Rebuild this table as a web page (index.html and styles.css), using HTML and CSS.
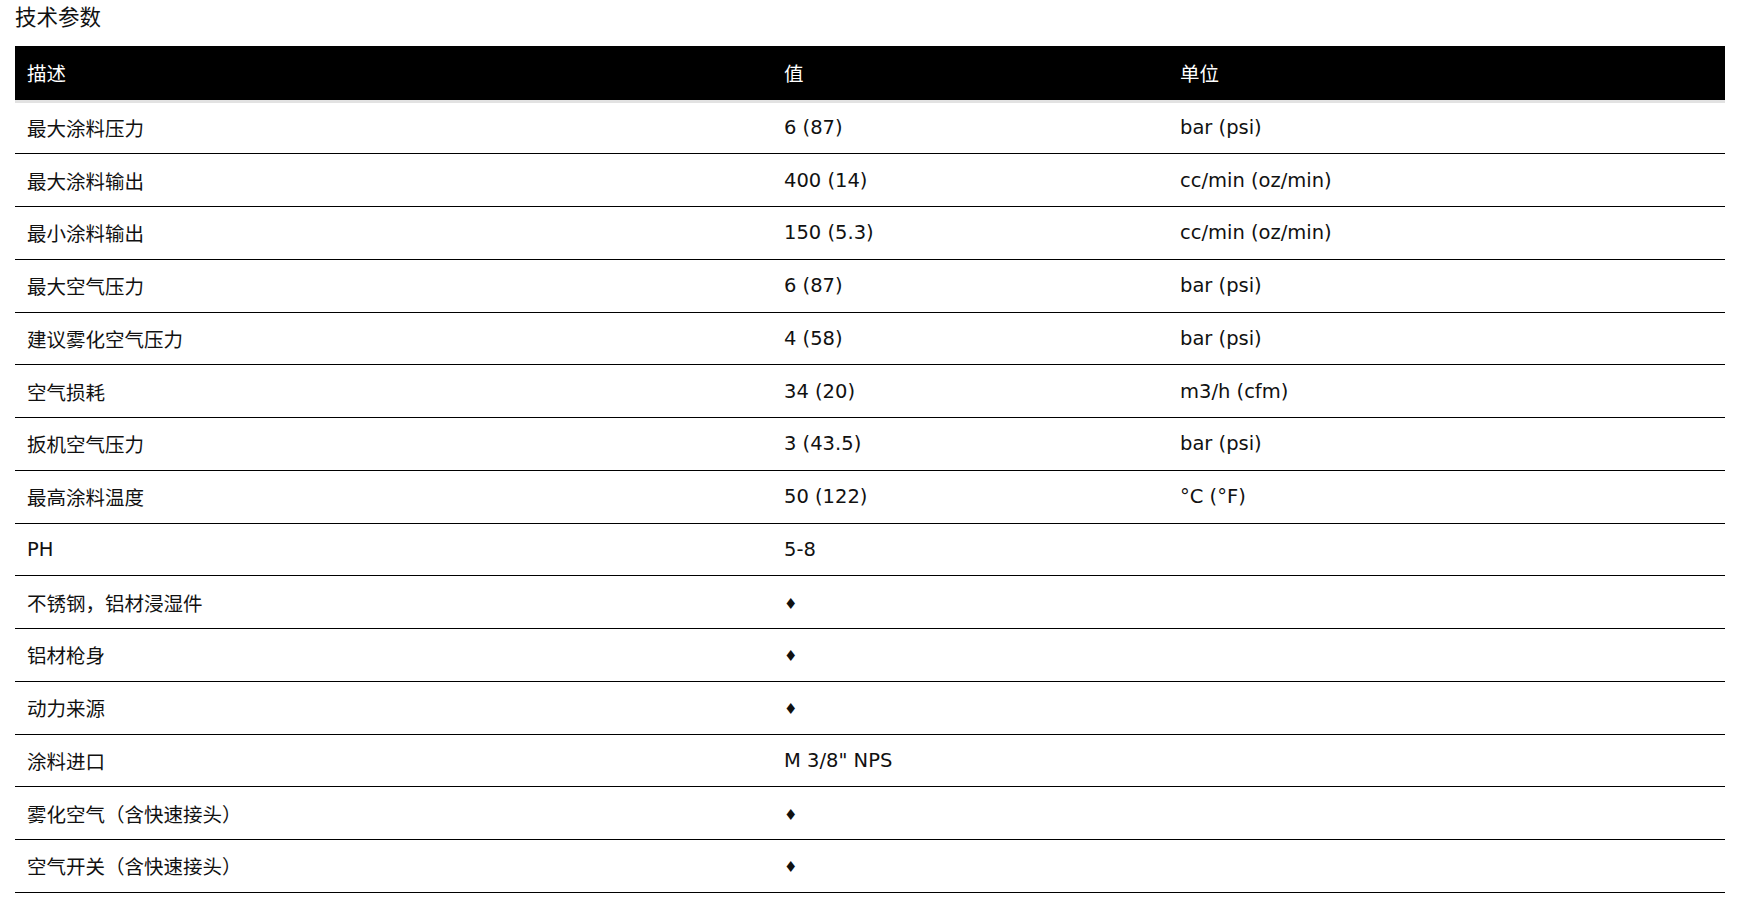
FILE: index.html
```html
<!DOCTYPE html>
<html lang="zh-CN">
<head>
<meta charset="utf-8">
<title>技术参数</title>
<link rel="stylesheet" href="styles.css">
</head>
<body>
<div class="page">
  <div class="title">技术参数</div>
  <table class="spec">
    <colgroup>
      <col class="c1"><col class="c2"><col class="c3">
    </colgroup>
    <thead>
      <tr><th>描述</th><th>值</th><th>单位</th></tr>
    </thead>
    <tbody>
      <tr><td>最大涂料压力</td><td>6 (87)</td><td>bar (psi)</td></tr>
      <tr><td>最大涂料输出</td><td>400 (14)</td><td>cc/min (oz/min)</td></tr>
      <tr><td>最小涂料输出</td><td>150 (5.3)</td><td>cc/min (oz/min)</td></tr>
      <tr><td>最大空气压力</td><td>6 (87)</td><td>bar (psi)</td></tr>
      <tr><td>建议雾化空气压力</td><td>4 (58)</td><td>bar (psi)</td></tr>
      <tr><td>空气损耗</td><td>34 (20)</td><td>m3/h (cfm)</td></tr>
      <tr><td>扳机空气压力</td><td>3 (43.5)</td><td>bar (psi)</td></tr>
      <tr><td>最高涂料温度</td><td>50 (122)</td><td>°C (°F)</td></tr>
      <tr><td>PH</td><td>5-8</td><td></td></tr>
      <tr><td>不锈钢，铝材浸湿件</td><td><span class="dia">♦</span></td><td></td></tr>
      <tr><td>铝材枪身</td><td><span class="dia">♦</span></td><td></td></tr>
      <tr><td>动力来源</td><td><span class="dia">♦</span></td><td></td></tr>
      <tr><td>涂料进口</td><td>M 3/8" NPS</td><td></td></tr>
      <tr><td>雾化空气（含快速接头）</td><td><span class="dia">♦</span></td><td></td></tr>
      <tr><td>空气开关（含快速接头）</td><td><span class="dia">♦</span></td><td></td></tr>
    </tbody>
  </table>
</div>
</body>
</html>
```
FILE: styles.css
```css
html, body {
  margin: 0;
  padding: 0;
  background: #ffffff;
}
body {
  font-family: "Century Gothic", "DejaVu Sans", "Noto Sans CJK SC", sans-serif;
  color: #111111;
}
.page {
  padding: 0 15px;
}
.title {
  font-family: "Noto Sans CJK SC", sans-serif;
  font-size: 21.5px;
  line-height: 32px;
  height: 32px;
  margin-bottom: 14px;
  color: #111;
}
.spec {
  width: 1710px;
  border-collapse: collapse;
  table-layout: fixed;
  font-size: 19.5px;
}
.c1 { width: 757px; }
.c2 { width: 396px; }
.c3 { width: 557px; }
.spec th {
  background: #000;
  color: #fff;
  font-weight: normal;
  text-align: left;
  height: 55px;
  padding: 0 12px;
  border-bottom: 3px solid #e2e2e2;
  box-sizing: border-box;
}
.spec td {
  height: 52.76px;
  padding: 0 12px;
  border-bottom: 1px solid #000;
  text-align: left;
  vertical-align: middle;
  box-sizing: border-box;
}
.dia {
  display: inline-block;
  font-family: "DejaVu Sans", sans-serif;
  font-size: 15px;
}
```
